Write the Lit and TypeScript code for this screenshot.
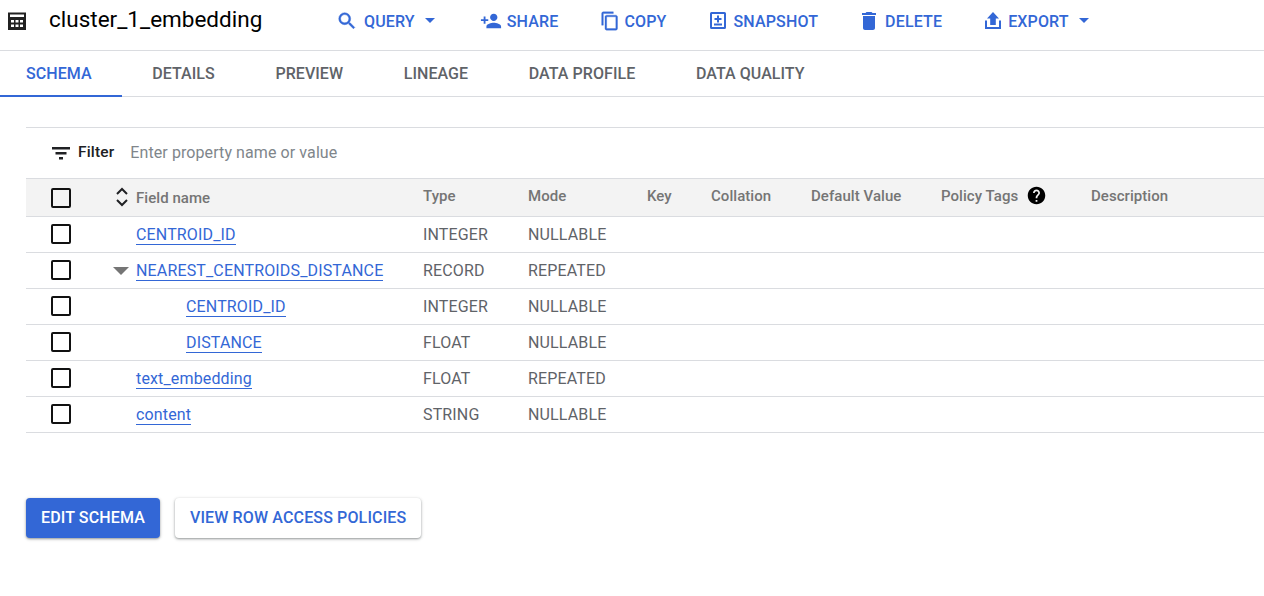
import { LitElement, html, css, svg, nothing } from "lit";
import { customElement } from "lit/decorators.js";

const ICONS: Record<string, unknown> = {
  search: svg`<svg class="i-search" viewBox="0 0 24 24"><path stroke="#3367d6" stroke-width=".5" d="M15.500 14h-.79l-.28-.27A6.470 6.470 0 0 0 16 9.500 6.500 6.500 0 1 0 9.500 16c1.610 0 3.090-.59 4.230-1.570l.27.28v.79l5 4.990L20.490 19l-4.990-5zm-6 0C7.010 14 5 11.990 5 9.500S7.010 5 9.500 5 14 7.010 14 9.500 11.990 14 9.500 14z"/></svg>`,
  share: svg`<svg class="i-share" viewBox="0 0 24 24"><path d="M15 12c2.210 0 4-1.790 4-4s-1.790-4-4-4-4 1.790-4 4 1.790 4 4 4zm-9-2V7H4v3H1v2h3v3h2v-3h3v-2H6zm9 4c-2.670 0-8 1.340-8 4v2h16v-2c0-2.660-5.330-4-8-4z"/></svg>`,
  copy: svg`<svg class="i-copy" viewBox="0 0 24 24"><path stroke="#3367d6" stroke-width=".4" d="M16 1H4c-1.100 0-2 .9-2 2v14h2V3h12V1zm3 4H8c-1.100 0-2 .9-2 2v14c0 1.100.9 2 2 2h11c1.100 0 2-.9 2-2V7c0-1.100-.9-2-2-2zm0 16H8V7h11v14z"/></svg>`,
  snapshot: svg`<svg class="i-snapshot" viewBox="0 0 16 17"><path fill-rule="evenodd" d="M1.500 0h13A1.500 1.500 0 0 1 16 1.500v14a1.500 1.500 0 0 1-1.500 1.500h-13A1.500 1.500 0 0 1 0 15.500v-14A1.500 1.500 0 0 1 1.500 0zM2 2v13h12V2zM7 3.500h2v2.500h2.500v2H9v2.500H7V8H4.500V6H7zM4 11.500h8V13.500H4z"/></svg>`,
  delete: svg`<svg class="i-delete" viewBox="0 0 24 24"><path d="M6 19c0 1.100.9 2 2 2h8c1.100 0 2-.9 2-2V7H6v12zM19 4h-3.500l-1-1h-5l-1 1H5v2h14V4z"/></svg>`,
  export: svg`<svg class="i-export" viewBox="0 0 16 17"><path d="M8 0l6 6.500H10.800V13H5.200V6.500H2zM0 8.500h2V15h12V8.500h2V17H0z"/></svg>`,
};

const TOOLBAR = [
  { label: "QUERY", icon: "search", menu: true, cls: "query" },
  { label: "SHARE", icon: "share", cls: "share" },
  { label: "COPY", icon: "copy", cls: "copy" },
  { label: "SNAPSHOT", icon: "snapshot", cls: "snapshot" },
  { label: "DELETE", icon: "delete", cls: "delete" },
  { label: "EXPORT", icon: "export", menu: true, cls: "export" },
];

const TABS = ["SCHEMA", "DETAILS", "PREVIEW", "LINEAGE", "DATA PROFILE", "DATA QUALITY"];

const ROWS = [
  { name: "CENTROID_ID", type: "INTEGER", mode: "NULLABLE" },
  { name: "NEAREST_CENTROIDS_DISTANCE", type: "RECORD", mode: "REPEATED", open: true },
  { name: "CENTROID_ID", type: "INTEGER", mode: "NULLABLE", child: true },
  { name: "DISTANCE", type: "FLOAT", mode: "NULLABLE", child: true },
  { name: "text_embedding", type: "FLOAT", mode: "REPEATED" },
  { name: "content", type: "STRING", mode: "NULLABLE" },
];

@customElement("app-root")
export class AppRoot extends LitElement {
  static styles = css`
    :host {
      display: block;
      height: 596px;
      overflow: hidden;
      background: #fff;
      font-family: Roboto, "Liberation Sans", sans-serif;
      font-size: 16px;
      letter-spacing: 0.15px;
      color: #5f6368;
    }

    .toolbar {
      display: flex;
      align-items: center;
      box-sizing: border-box;
      height: 51px;
      padding-bottom: 9px;
      border-bottom: 1px solid #dadce0;
    }
    .table-icon {
      flex: none;
      width: 18px;
      height: 18px;
      margin-left: 8px;
      fill: #212121;
    }
    .title {
      width: 287px;
      margin-left: 23px;
      font-size: 22.5px;
      line-height: 28px;
      letter-spacing: 0;
      color: #000;
      margin-top: -4px;
    }
    .actions {
      display: flex;
      align-items: center;
    }
    .action {
      display: flex;
      align-items: center;
      color: #3367d6;
      font-weight: 500;
      line-height: 20px;
    }
    .action svg {
      flex: none;
      fill: #3367d6;
    }
    .label {
      margin-top: 2px;
    }
    .i-search { width: 22px; height: 22px; margin-right: 6px; }
    .i-share { width: 22px; height: 22px; margin-right: 5px; }
    .i-copy { width: 20px; height: 20px; margin-right: 4px; }
    .i-snapshot { width: 16px; height: 17px; margin-right: 7px; }
    .i-delete { width: 24px; height: 24px; margin-right: 4px; }
    .i-export { width: 16px; height: 17px; margin-right: 7px; }
    .share { margin-left: 45px; }
    .copy { margin-left: 42px; }
    .snapshot { margin-left: 44px; }
    .delete { margin-left: 39px; }
    .export { margin-left: 43px; }
    .caret {
      width: 0;
      height: 0;
      margin: 0 0 1px 10px;
      border-left: 5px solid transparent;
      border-right: 5px solid transparent;
      border-top: 5px solid #3367d6;
    }

    .tabs {
      display: flex;
      height: 45px;
      border-bottom: 1px solid #dadce0;
      letter-spacing: 0.06px;
    }
    .tab {
      display: flex;
      align-items: center;
      justify-content: center;
      box-sizing: border-box;
      height: 46px;
      padding: 0 30px 1px;
      margin-right: 0.6px;
      font-weight: 500;
    }
    .tab.active {
      padding-left: 26px;
      padding-bottom: 0;
      color: #3367d6;
      border-bottom: 2px solid #3367d6;
    }

    .schema {
      margin: 30px 0 0 26px;
      border-top: 1px solid #dadce0;
    }
    .filter {
      display: flex;
      align-items: center;
      height: 50px;
    }
    .filter svg {
      width: 24px;
      height: 24px;
      margin-left: 23px;
      fill: #202124;
    }
    .filter-label {
      margin-left: 5px;
      padding-bottom: 2px;
      color: #202124;
      font-weight: 500;
      font-size: 15.5px;
    }
    .filter-hint {
      margin-left: 16px;
      padding-bottom: 2px;
      letter-spacing: 0.09px;
      color: #80868b;
    }

    .row {
      display: grid;
      grid-template-columns: 110px 287px 105px 119px 64px 100px 130px 150px 1fr;
      align-items: center;
      box-sizing: border-box;
      height: 36px;
      border-bottom: 1px solid #dadce0;
    }
    .row.head {
      height: 39px;
      background: #f3f3f3;
      border-top: 1px solid #dadce0;
      font-size: 15px;
      font-weight: 500;
      letter-spacing: 0.05px;
      color: #757575;
    }
    .select {
      display: flex;
      align-items: center;
      position: relative;
      padding-left: 25px;
      margin-top: -2px;
    }
    .head .select {
      margin-top: 0;
    }
    .box {
      box-sizing: border-box;
      width: 20px;
      height: 20px;
      border: 2px solid #111;
      border-radius: 2px;
    }
    .sort {
      position: absolute;
      left: 84px;
      top: -3px;
      width: 24px;
      height: 24px;
      stroke: #202124;
      stroke-width: 2;
      fill: none;
    }
    .expand {
      position: absolute;
      left: 87px;
      top: 7px;
      width: 0;
      height: 0;
      border-left: 8px solid transparent;
      border-right: 8px solid transparent;
      border-top: 8px solid #757575;
    }
    .head .name {
      padding-top: 0;
    }
    .name a {
      color: #3367d6;
      border-bottom: 1px solid #3367d6;
    }
    .name.child {
      padding-left: 50px;
    }
    .head-cell {
      display: flex;
      align-items: center;
      margin-top: -4px;
    }
    .help {
      width: 21px;
      height: 21px;
      margin-left: 8px;
      fill: #000;
    }

    .buttons {
      display: flex;
      gap: 15px;
      margin: 65px 0 0 26px;
      letter-spacing: 0.14px;
    }
    .btn {
      display: flex;
      align-items: center;
      box-sizing: border-box;
      height: 40px;
      padding: 0 15px 2px;
      border-radius: 4px;
      font-weight: 500;
      box-shadow: 0 1px 2px rgba(60, 64, 67, 0.4), 0 1px 3px 1px rgba(60, 64, 67, 0.15);
    }
    .btn.primary {
      background: #3367d6;
      color: #fff;
    }
    .btn.secondary {
      background: #fff;
      color: #3367d6;
    }
  `;

  render() {
    return html`
      <div class="toolbar">
        <svg class="table-icon" viewBox="0 0 18 18">
          <path fill-rule="evenodd" d="M0 .5h18V18H0z M2 2.500h14v2.500H2z M3 8h3v2.500H3z M7.500 8h3v2.500h-3z M12 8h3v2.500h-3z M3 12.500h3V15H3z M7.500 12.500h3V15h-3z M12 12.500h3V15h-3z" />
        </svg>
        <div class="title">cluster_1_embedding</div>
        <div class="actions">
          ${TOOLBAR.map(
            (a) => html`
              <div class="action ${a.cls}">
                ${ICONS[a.icon]}
                <span class="label">${a.label}</span>
                ${a.menu ? html`<span class="caret"></span>` : nothing}
              </div>
            `
          )}
        </div>
      </div>

      <div class="tabs">
        ${TABS.map((t, i) => html`<div class="tab ${i === 0 ? "active" : ""}">${t}</div>`)}
      </div>

      <div class="schema">
        <div class="filter">
          <svg viewBox="0 0 24 24"><path d="M3 6h18v2.500H3zM6.500 11h11v2.500h-11zM10 16h4v2.500h-4z" /></svg>
          <span class="filter-label">Filter</span>
          <span class="filter-hint">Enter property name or value</span>
        </div>

        <div class="row head">
          <div class="select">
            <span class="box"></span>
            <svg class="sort" viewBox="0 0 24 24"><path d="M7 9l5-5 5 5M7 15l5 5 5-5" /></svg>
          </div>
          <div class="name">Field name</div>
          <div class="head-cell">Type</div>
          <div class="head-cell">Mode</div>
          <div class="head-cell">Key</div>
          <div class="head-cell">Collation</div>
          <div class="head-cell">Default Value</div>
          <div class="head-cell">
            Policy Tags
            <svg class="help" viewBox="0 0 24 24">
              <path d="M12 2C6.480 2 2 6.480 2 12s4.480 10 10 10 10-4.480 10-10S17.520 2 12 2zm1 17h-2v-2h2v2zm2.070-7.750l-.9.920C13.450 12.900 13 13.500 13 15h-2v-.5c0-1.100.45-2.100 1.170-2.830l1.240-1.260c.37-.36.59-.86.59-1.410 0-1.100-.9-2-2-2s-2 .9-2 2H8c0-2.210 1.790-4 4-4s4 1.790 4 4c0 .88-.36 1.680-.93 2.250z" />
            </svg>
          </div>
          <div class="head-cell">Description</div>
        </div>

        ${ROWS.map(
          (r) => html`
            <div class="row">
              <div class="select">
                <span class="box"></span>
                ${r.open ? html`<span class="expand"></span>` : nothing}
              </div>
              <div class="name ${r.child ? "child" : ""}"><a>${r.name}</a></div>
              <div>${r.type}</div>
              <div>${r.mode}</div>
            </div>
          `
        )}
      </div>

      <div class="buttons">
        <div class="btn primary">EDIT SCHEMA</div>
        <div class="btn secondary">VIEW ROW ACCESS POLICIES</div>
      </div>
    `;
  }
}
